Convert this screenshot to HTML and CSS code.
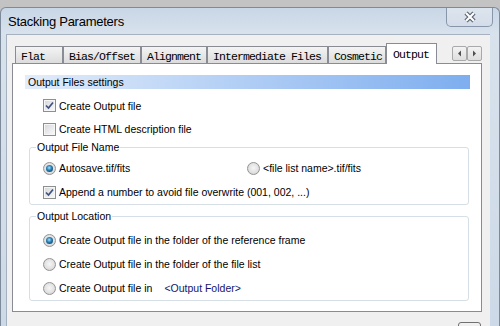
FILE: index.html
```html
<!DOCTYPE html>
<html lang="en">
<head>
    <meta charset="UTF-8">
    <meta name="viewport" content="width=device-width, initial-scale=1.0">
    <title>Stacking Parameters</title>
    <link rel="stylesheet" href="styles.css">
</head>
<body>
    <div class="window">
        <!-- Title bar -->
        <div class="titlebar">
            <span class="title">Stacking Parameters</span>
            <div class="close-btn">
                <svg width="16" height="12" viewBox="0 0 16 12">
                    <path d="M4 2 L12 10 M12 2 L4 10" stroke="#55606e" stroke-width="4.4" fill="none"/>
                    <path d="M4 2 L12 10 M12 2 L4 10" stroke="#ffffff" stroke-width="2.2" fill="none"/>
                </svg>
            </div>
        </div>

        <div class="client">
            <!-- Tabs -->
            <div class="tabs">
                <div class="tab tab-flat">Flat</div>
                <div class="tab tab-bias">Bias/Offset</div>
                <div class="tab tab-align">Alignment</div>
                <div class="tab tab-inter">Intermediate Files</div>
                <div class="tab tab-cosm">Cosmetic</div>
                <div class="tab tab-output active">Output</div>
                <div class="tab-scroll">
                    <span class="scroll-btn">
                        <svg width="5" height="7" viewBox="0 0 5 7"><path d="M4 0.5 L1 3.5 L4 6.5 Z" fill="#505050"/></svg>
                    </span>
                    <span class="scroll-btn">
                        <svg width="5" height="7" viewBox="0 0 5 7"><path d="M1 0.5 L4 3.5 L1 6.5 Z" fill="#505050"/></svg>
                    </span>
                </div>
            </div>

            <!-- Output page -->
            <div class="panel">
                <div class="section-head">Output Files settings</div>

                <div class="row row-first">
                    <span class="check"><svg width="9" height="9" viewBox="0 0 9 9"><path d="M1 4.5 L3.5 7 L8 1.5" stroke="#3f5181" stroke-width="1.7" fill="none"/></svg></span>
                    Create Output file
                </div>
                <div class="row">
                    <span class="check"></span>
                    Create HTML description file
                </div>

                <fieldset class="group">
                    <legend>Output File Name</legend>
                    <div class="row">
                        <span class="choice">
                            <span class="radio on"></span>
                            Autosave.tif/fits
                        </span>
                        <span class="radio"></span>
                        &lt;file list name&gt;.tif/fits
                    </div>
                    <div class="row">
                        <span class="check"><svg width="9" height="9" viewBox="0 0 9 9"><path d="M1 4.5 L3.5 7 L8 1.5" stroke="#3f5181" stroke-width="1.7" fill="none"/></svg></span>
                        Append a number to avoid file overwrite (001, 002, ...)
                    </div>
                </fieldset>

                <fieldset class="group group-location">
                    <legend>Output Location</legend>
                    <div class="row">
                        <span class="radio on"></span>
                        Create Output file in the folder of the reference frame
                    </div>
                    <div class="row">
                        <span class="radio"></span>
                        Create Output file in the folder of the file list
                    </div>
                    <div class="row">
                        <span class="radio"></span>
                        Create Output file in
                        <span class="folder-link">&lt;Output Folder&gt;</span>
                    </div>
                </fieldset>
            </div>

            <div class="footer">
                <span class="small-btn"></span>
            </div>
        </div>
    </div>
</body>
</html>
```

FILE: styles.css
```css
html, body {
    margin: 0;
    height: 326px;
    overflow: hidden;
}
body {
    background: #c3c3c3;
    font-family: "Liberation Sans", Arial, sans-serif;
    font-size: 10.5px;
    color: #000;
}
.window {
    margin-top: 7px;
    width: 500px;
    height: 319px;
    box-sizing: border-box;
    border: 1px solid #7d8a99;
    border-bottom: none;
    border-radius: 6px 6px 0 0;
    background: linear-gradient(#c9d6e6, #d8e2ed 26px, #cdd9e6);
    padding: 0 9px 0 5px;
}
.titlebar {
    height: 26px;
    display: flex;
    align-items: flex-start;
    justify-content: space-between;
}
.title {
    padding: 6px 0 0 2px;
    font-size: 13px;
    letter-spacing: -0.25px;
    line-height: 15px;
    color: #000;
}
.close-btn {
    width: 47px;
    height: 19px;
    margin-right: -3px;
    box-sizing: border-box;
    border: 1px solid #8796a9;
    border-top: none;
    border-radius: 0 0 5px 5px;
    background: linear-gradient(#dde5ee, #d3dde9);
    display: flex;
    align-items: center;
    justify-content: center;
}
.client {
    height: 292px;
    box-sizing: border-box;
    background: #f0f0f0;
    border-left: 1px solid #a5b1bf;
    border-top: 1px solid #a5b1bf;
    padding: 8px 8px 0 5px;
}

/* tabs */
.tabs {
    display: flex;
    align-items: flex-end;
    height: 21px;
    margin-bottom: -1px;
    position: relative;
    z-index: 1;
}
.tab {
    box-sizing: border-box;
    height: 17px;
    margin-bottom: 1px;
    border: 1px solid #898c95;
    border-bottom: none;
    background: linear-gradient(#f4f4f4, #e8e8e8 50%, #dcdcdc);
    padding: 2px 0 0 5px;
    font-family: "Liberation Mono", "Courier New", monospace;
    font-size: 11.5px;
    letter-spacing: -0.9px;
    line-height: 15px;
    white-space: nowrap;
}
.tab-flat { width: 48px; margin-left: 3px; }
.tab-bias { width: 78px; }
.tab-align { width: 66px; }
.tab-inter { width: 121px; }
.tab-cosm { width: 58px; }
.tab-output { width: 51px; }
.tab.active {
    height: 21px;
    margin-bottom: 0;
    background: #fff;
    padding-top: 3px;
    padding-left: 6px;
}
.tab-scroll {
    margin-left: auto;
    align-self: flex-start;
    margin-top: 3px;
    display: flex;
}
.scroll-btn {
    width: 15px;
    height: 15px;
    box-sizing: border-box;
    border: 1px solid #a9a9a9;
    border-radius: 2px;
    background: linear-gradient(#f3f3f3, #dedede);
    display: flex;
    align-items: center;
    justify-content: center;
}

/* page */
.panel {
    height: 249px;
    box-sizing: border-box;
    border: 1px solid #898c95;
    background: #fff;
    padding: 11px 11px 0 12px;
}
.section-head {
    height: 14px;
    line-height: 14px;
    padding-left: 3px;
    background: linear-gradient(to right, #e2ecfa, #7eaeef);
}
.row {
    display: flex;
    align-items: center;
    height: 24px;
    padding-left: 18px;
    white-space: nowrap;
}
.row-first {
    margin-top: 5px;
    height: 23px;
}
.check, .radio {
    flex: none;
    width: 13px;
    height: 13px;
    box-sizing: border-box;
    margin-right: 3px;
    border: 1px solid #8e8f8f;
    display: flex;
    align-items: center;
    justify-content: center;
}
.check {
    background: linear-gradient(135deg, #d4d6d9, #fbfbfb);
    box-shadow: inset 0 0 0 1px #f6f6f6;
}
.radio {
    border-radius: 50%;
    border-color: #939393;
    background: radial-gradient(circle at 50% 45%, #f6f6f6 0, #e2e2e2 55%, #c9c9c9 100%);
}
.radio.on::after {
    content: "";
    width: 7px;
    height: 7px;
    border-radius: 50%;
    background: radial-gradient(circle at 45% 40%, #a9e2fb 0, #2c86bd 40%, #0c3a5e 85%);
}
.choice {
    display: flex;
    align-items: center;
    width: 204px;
}
.group {
    margin: 0 1px 0 4px;
    padding: 2px 6px 0;
    border: 1px solid #d5dfe5;
    border-radius: 3px;
}
.group legend {
    padding: 0 1px;
    line-height: 13px;
}
.group .row {
    padding-left: 7px;
}
.group-location {
    margin-top: 5px;
    padding-top: 5px;
}
.folder-link {
    margin-left: 12px;
    color: #14146e;
}
.footer {
    display: flex;
    justify-content: flex-end;
    padding-top: 10px;
    padding-right: 1px;
}
.small-btn {
    width: 23px;
    height: 20px;
    box-sizing: border-box;
    border: 1px solid #707070;
    border-radius: 3px;
    background: linear-gradient(#f2f2f2, #dcdcdc);
}
```
